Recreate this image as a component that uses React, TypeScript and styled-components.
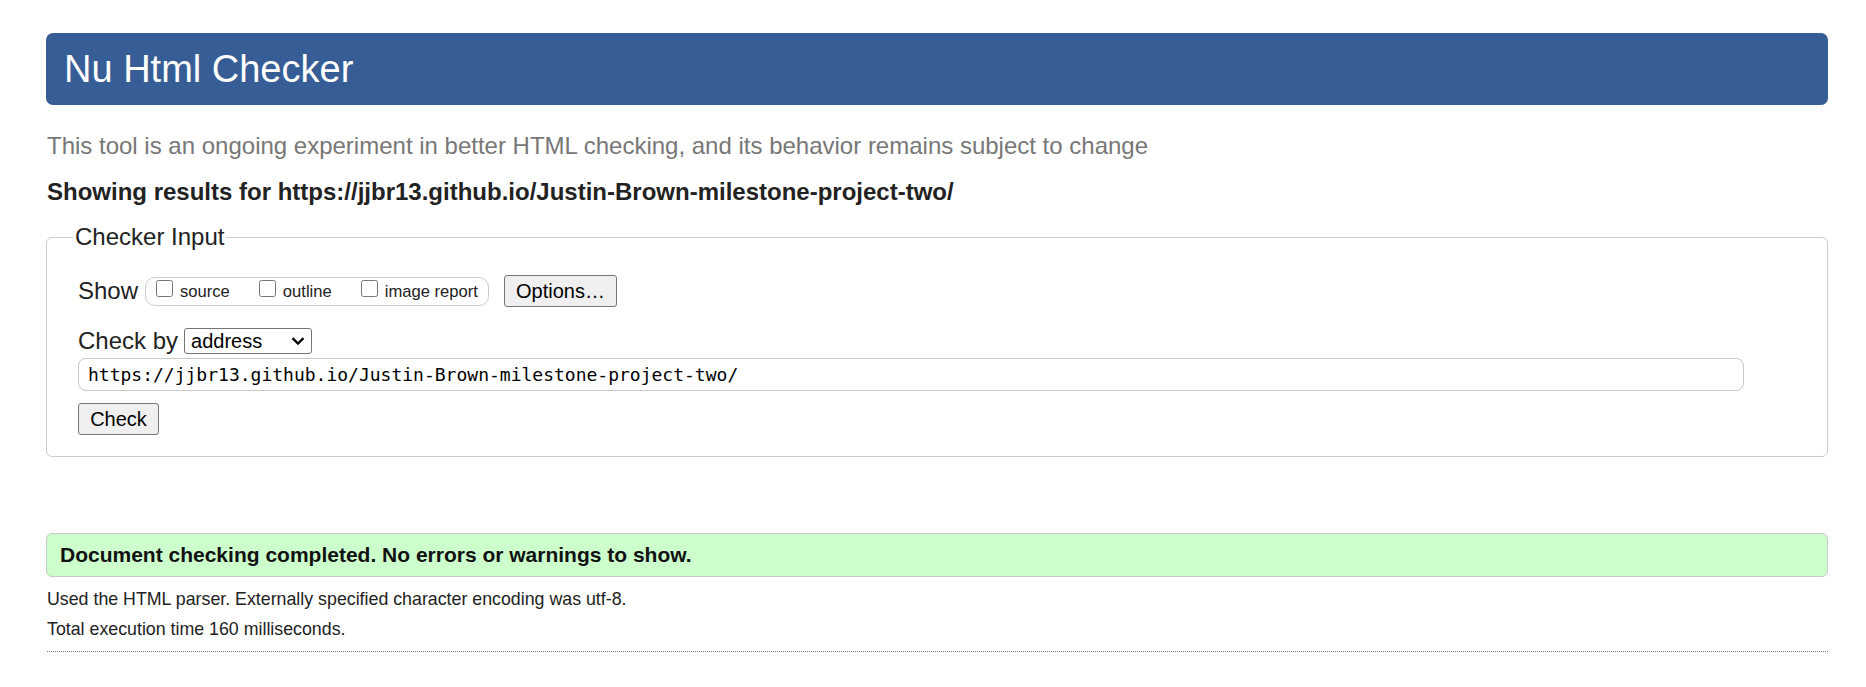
import React from 'react';
import styled, { createGlobalStyle } from 'styled-components';

const GlobalStyle = createGlobalStyle`
  html, body {
    margin: 0;
    padding: 0;
    background: #fff;
  }
  body {
    font-family: "Liberation Sans", Arial, sans-serif;
    color: #222;
  }
`;

const Page = styled.div`
  padding: 33px 38px 0 46px;
`;

const Header = styled.h1`
  margin: 0;
  height: 72px;
  display: flex;
  align-items: center;
  padding: 0 18px;
  background-color: #365d95;
  color: #fff;
  font-size: 38px;
  font-weight: normal;
  border-radius: 7px;
`;

const About = styled.p`
  margin: 26px 0 0 1px;
  font-size: 24px;
  line-height: 30px;
  color: #777;
`;

const Results = styled.p`
  margin: 16px 0 0 1px;
  font-size: 24px;
  line-height: 30px;
  font-weight: bold;
  color: #222;
`;

const Fieldset = styled.fieldset`
  margin: 15px 0 0;
  padding: 23px 30px 21px 31px;
  border: 1px solid #ccc;
  border-radius: 6px;
  min-width: 0;
`;

const Legend = styled.legend`
  font-size: 24px;
  line-height: 30px;
  padding: 0 2px;
  margin-left: -5px;
  color: #222;
`;

const Row = styled.div<{ $height: number; $top?: number }>`
  display: flex;
  align-items: center;
  height: ${p => p.$height}px;
  margin-top: ${p => p.$top ?? 0}px;
`;

const Label = styled.span<{ $gap: number }>`
  font-size: 24px;
  margin-right: ${p => p.$gap}px;
  color: #222;
`;

const CheckGroup = styled.div`
  display: flex;
  align-items: center;
  box-sizing: border-box;
  height: 29px;
  padding: 0 10px;
  gap: 29px;
  border: 1px solid #ccc;
  border-radius: 10px;
  margin-right: 15px;
`;

const CheckItem = styled.label`
  display: flex;
  align-items: baseline;
  font-size: 16.6px;
  color: #222;
`;

const Box = styled.input`
  width: 17px;
  height: 17px;
  margin: 0 7px 2px 0;
`;

const Button = styled.button<{ $width: number }>`
  box-sizing: border-box;
  width: ${p => p.$width}px;
  height: 32px;
  padding: 0;
  font-family: "Liberation Sans", Arial, sans-serif;
  font-size: 20px;
  color: #000;
  background: #efefef;
  border: 1px solid #767676;
  border-radius: 3px;
`;

const SelectWrap = styled.div`
  position: relative;
  display: inline-block;
`;

const Select = styled.select`
  appearance: none;
  box-sizing: border-box;
  width: 128px;
  height: 26px;
  padding: 0 0 0 6px;
  font-family: "Liberation Sans", Arial, sans-serif;
  font-size: 20px;
  color: #000;
  background: #fff;
  border: 1px solid #767676;
  border-radius: 3px;
`;

const Chevron = styled.svg`
  position: absolute;
  right: 7px;
  top: 9px;
  pointer-events: none;
`;

const UrlInput = styled.input`
  display: block;
  box-sizing: border-box;
  width: calc(100% - 53px);
  height: 33px;
  margin-top: 2px;
  padding: 0 9px;
  font-family: "DejaVu Sans Mono", "Liberation Mono", monospace;
  font-size: 18px;
  color: #000;
  border: 1px solid #c8c8c8;
  border-radius: 8px;
  outline: none;
`;

const SubmitRow = styled.div`
  margin-top: 12px;
  height: 32px;
`;

const Success = styled.div`
  margin-top: 76px;
  box-sizing: border-box;
  height: 44px;
  display: flex;
  align-items: center;
  padding: 0 13px;
  background: #ccffcc;
  border: 1px solid #c8c8c8;
  border-radius: 6px;
  font-size: 21px;
  font-weight: bold;
  color: #111;
`;

const Details = styled.p<{ $top: number }>`
  margin: ${p => p.$top}px 0 0 1px;
  font-size: 17.8px;
  line-height: 30px;
  color: #222;
`;

const Rule = styled.hr`
  margin: 7px 0 0 1px;
  border: 0;
  border-top: 1px dotted #777;
  height: 0;
`;

const options = ['source', 'outline', 'image report'];

const App: React.FC = () => {
  const url = 'https://jjbr13.github.io/Justin-Brown-milestone-project-two/';
  return (
    <Page>
      <GlobalStyle />
      <Header>Nu Html Checker</Header>
      <About>This tool is an ongoing experiment in better HTML checking, and its behavior remains subject to change</About>
      <Results>Showing results for {url}</Results>
      <Fieldset>
        <Legend>Checker Input</Legend>
        <Row $height={32}>
          <Label $gap={7}>Show</Label>
          <CheckGroup>
            {options.map(o => (
              <CheckItem key={o}>
                <Box type="checkbox" />
                {o}
              </CheckItem>
            ))}
          </CheckGroup>
          <Button $width={113}>Options…</Button>
        </Row>
        <Row $height={30} $top={19}>
          <Label $gap={6}>Check by</Label>
          <SelectWrap>
            <Select defaultValue="address">
              <option value="address">address</option>
              <option value="file">file upload</option>
              <option value="text">text input</option>
            </Select>
            <Chevron width="14" height="8" viewBox="0 0 14 8">
              <path d="M1.5 1.2 L7 6.5 L12.5 1.2" fill="none" stroke="#000" strokeWidth="2.4" />
            </Chevron>
          </SelectWrap>
        </Row>
        <UrlInput type="url" defaultValue={url} />
        <SubmitRow>
          <Button $width={81}>Check</Button>
        </SubmitRow>
      </Fieldset>
      <Success>Document checking completed. No errors or warnings to show.</Success>
      <Details $top={7}>Used the HTML parser. Externally specified character encoding was utf-8.</Details>
      <Details $top={0}>Total execution time 160 milliseconds.</Details>
      <Rule />
    </Page>
  );
};

export default App;
